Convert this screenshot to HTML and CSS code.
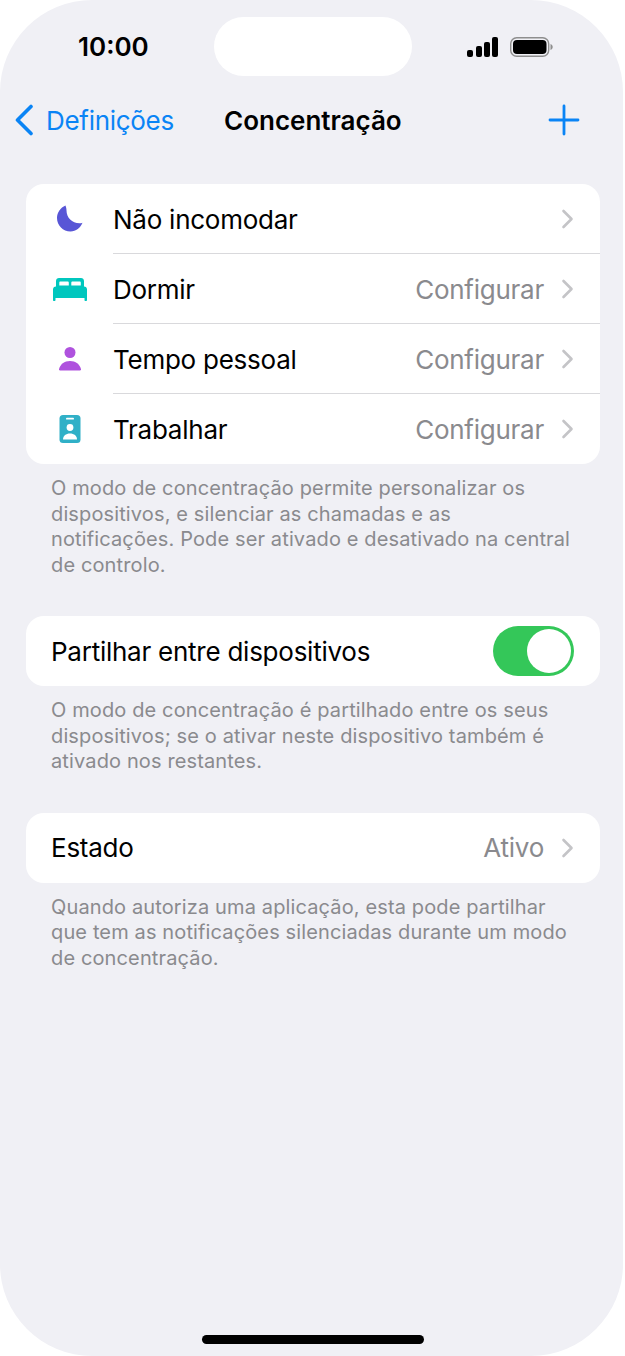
FILE: index.html
```html
<!DOCTYPE html>
<html lang="pt">
<head>
    <meta charset="UTF-8">
    <meta name="viewport" content="width=device-width, initial-scale=1.0">
    <title>Concentração</title>
    <link rel="stylesheet" href="styles.css">
</head>
<body>

<div class="screen">
    <!-- Barra de estado -->
    <div class="status-bar">
        <span class="clock">10:00</span>
        <div class="island"></div>
        <div class="status-icons">
            <svg class="signal" width="32" height="20" viewBox="0 0 32 20">
                <rect x="0" y="13" width="6" height="7" rx="2"/>
                <rect x="9" y="9" width="6" height="11" rx="2"/>
                <rect x="17" y="5" width="6" height="15" rx="2"/>
                <rect x="25" y="0" width="6" height="20" rx="2"/>
            </svg>
            <svg class="battery" width="44" height="20" viewBox="0 0 44 20">
                <rect x="0.7" y="0.7" width="38" height="18.6" rx="6" fill="none" stroke="#8e8e8e" stroke-width="1.4"/>
                <rect x="3" y="3" width="33.5" height="14" rx="4"/>
                <path d="M40.5 7v6c1.400-.5 2.200-1.700 2.200-3s-.8-2.500-2.200-3z" fill="#8e8e8e"/>
            </svg>
        </div>
    </div>

    <!-- Navegação -->
    <div class="nav-bar">
        <a class="back">
            <svg width="20" height="32" viewBox="0 0 20 32"><path d="M17 2.500 3.500 16 17 29.500" fill="none" stroke="#0a84f5" stroke-width="3.600" stroke-linecap="round" stroke-linejoin="round"/></svg>
            <span>Definições</span>
        </a>
        <h1>Concentração</h1>
        <svg class="plus" width="32" height="32" viewBox="0 0 32 32"><path d="M16 2v28M2 16h28" stroke="#0a84f5" stroke-width="2.800" stroke-linecap="round"/></svg>
    </div>

    <div class="group">
        <div class="row">
            <svg class="row-icon" width="30" height="30" viewBox="0 0 30 30"><path d="M10.500 1.500C5.500 3.500 2 8.500 2 14c0 7.500 6 13.500 13.500 13.500 5.500 0 10-3.500 12-8.700-1 .4-2 .5-3 .5-7.500 0-13-5.800-13-12.800 0-2-.5-3.500-1-5z" fill="#5856d6"/></svg>
            <div class="row-body"><span class="row-label">Não incomodar</span><svg class="chevron" width="13" height="20" viewBox="0 0 13 20"><path d="M2.500 2 10.500 10 2.500 18" fill="none" stroke="#c4c4c7" stroke-width="2.600" stroke-linecap="round" stroke-linejoin="round"/></svg></div>
        </div>
        <div class="row">
            <svg class="row-icon" width="34" height="23" viewBox="0 0 34 23"><path fill-rule="evenodd" d="M6 0h22c1.700 0 3 1.300 3 3v6H3V3c0-1.700 1.300-3 3-3zM7.500 3.500c-.8 0-1.200.5-1.200 1.200V7.500h9.500V4.700c0-.7-.5-1.200-1.200-1.200zm12 0c-.7 0-1.200.5-1.200 1.200V7.500h9.500V4.700c0-.7-.4-1.200-1.200-1.200z" fill="#00c7be"/><path d="M3 8.500h28c1.800 0 3 1.200 3 3V22c0 .7-.4 1-1 1h-.5c-.6 0-1-.3-1-1v-2h-29v2c0 .7-.4 1-1 1H1c-.6 0-1-.3-1-1V11.500c0-1.800 1.200-3 3-3z" fill="#00c7be"/></svg>
            <div class="row-body"><span class="row-label">Dormir</span><span class="row-value">Configurar</span><svg class="chevron" width="13" height="20" viewBox="0 0 13 20"><path d="M2.500 2 10.500 10 2.500 18" fill="none" stroke="#c4c4c7" stroke-width="2.600" stroke-linecap="round" stroke-linejoin="round"/></svg></div>
        </div>
        <div class="row">
            <svg class="row-icon" width="30" height="30" viewBox="0 0 30 30"><circle cx="15" cy="8.500" r="5.500" fill="#af52de"/><path d="M5 26.500c-.8 0-1.100-.5-1-1.200C5 20.500 9.500 17 15 17s10 3.500 11 8.300c.1.700-.2 1.200-1 1.200z" fill="#af52de"/></svg>
            <div class="row-body"><span class="row-label">Tempo pessoal</span><span class="row-value">Configurar</span><svg class="chevron" width="13" height="20" viewBox="0 0 13 20"><path d="M2.500 2 10.500 10 2.500 18" fill="none" stroke="#c4c4c7" stroke-width="2.600" stroke-linecap="round" stroke-linejoin="round"/></svg></div>
        </div>
        <div class="row">
            <svg class="row-icon" width="30" height="30" viewBox="0 0 30 30"><rect x="4.500" y="1" width="21" height="28" rx="3.500" fill="#30b0c7"/><rect x="11" y="3.800" width="8" height="1.800" rx=".9" fill="#fff"/><circle cx="15" cy="13.500" r="3.400" fill="#fff"/><path d="M8 25.500c0-3.800 3-6 7-6s7 2.200 7 6z" fill="#fff"/></svg>
            <div class="row-body"><span class="row-label">Trabalhar</span><span class="row-value">Configurar</span><svg class="chevron" width="13" height="20" viewBox="0 0 13 20"><path d="M2.500 2 10.500 10 2.500 18" fill="none" stroke="#c4c4c7" stroke-width="2.600" stroke-linecap="round" stroke-linejoin="round"/></svg></div>
        </div>
    </div>
    <p class="footnote">O modo de concentração permite personalizar os<br>dispositivos, e silenciar as chamadas e as<br>notificações. Pode ser ativado e desativado na central<br>de controlo.</p>

    <div class="group">
        <div class="row row-plain">
            <div class="row-body"><span class="row-label">Partilhar entre dispositivos</span><div class="toggle"><div class="knob"></div></div></div>
        </div>
    </div>
    <p class="footnote">O modo de concentração é partilhado entre os seus<br>dispositivos; se o ativar neste dispositivo também é<br>ativado nos restantes.</p>

    <div class="group">
        <div class="row row-plain">
            <div class="row-body"><span class="row-label">Estado</span><span class="row-value">Ativo</span><svg class="chevron" width="13" height="20" viewBox="0 0 13 20"><path d="M2.500 2 10.500 10 2.500 18" fill="none" stroke="#c4c4c7" stroke-width="2.600" stroke-linecap="round" stroke-linejoin="round"/></svg></div>
        </div>
    </div>
    <p class="footnote">Quando autoriza uma aplicação, esta pode partilhar<br>que tem as notificações silenciadas durante um modo<br>de concentração.</p>

    <div class="home-indicator"></div>
</div>

</body>
</html>
```

FILE: styles.css
```css
html, body {
    margin: 0;
    padding: 0;
    background-color: #fff;
}
body {
    font-family: Inter, "Liberation Sans", sans-serif;
    width: 625px;
    height: 1356px;
    overflow: hidden;
}
.screen {
    width: 623px;
    height: 1356px;
    background-color: #f0f0f5;
    border-radius: 92px;
    display: flex;
    flex-direction: column;
    color: #000;
}
.status-bar {
    display: flex;
    align-items: center;
    height: 59px;
    padding-top: 17px;
    padding-left: 78px;
    padding-right: 69px;
}
.clock {
    width: 136px;
    font-size: 26px;
    font-weight: 600;
}
.island {
    width: 198px;
    height: 59px;
    background-color: #fff;
    border-radius: 30px;
}
.status-icons {
    margin-left: auto;
    display: flex;
    align-items: center;
    gap: 11px;
}
.nav-bar {
    display: flex;
    align-items: center;
    height: 44px;
    margin-top: 22px;
    padding-left: 14px;
    padding-right: 43px;
}
.back {
    display: flex;
    align-items: center;
    gap: 12px;
    width: 210px;
    color: #0a84f5;
    font-size: 26px;
    letter-spacing: -0.3px;
}
h1 {
    margin: 0;
    font-size: 26px;
    font-weight: 600;
}
.plus {
    margin-left: auto;
}
.group {
    margin: 42px 23px 0 26px;
    background-color: #fff;
    border-radius: 18px;
    overflow: hidden;
}
.row {
    display: flex;
    align-items: center;
    height: 70px;
}
.row-icon {
    width: 88px;
    margin-right: -1px;
    flex-shrink: 0;
}
.row-plain {
    padding-left: 25px;
}
.row-body {
    flex: 1;
    height: 100%;
    display: flex;
    align-items: center;
    padding-right: 26px;
    font-size: 26px;
    letter-spacing: -0.25px;
}
.row:not(:last-child) .row-body {
    box-shadow: inset 0 -1px 0 #d9d9dc;
}
.row-value {
    margin-left: auto;
    margin-right: 17px;
    color: #8a8a8e;
}
.row-label + .chevron {
    margin-left: auto;
}
.toggle {
    margin-left: auto;
    width: 81px;
    height: 50px;
    background-color: #34c759;
    border-radius: 25px;
    display: flex;
    justify-content: flex-end;
    align-items: center;
    padding-right: 3px;
    box-sizing: border-box;
}
.knob {
    width: 44px;
    height: 44px;
    background-color: #fff;
    border-radius: 50%;
}
.footnote {
    margin: 12px 40px 0 51px;
    font-size: 20px;
    line-height: 25.500px;
    letter-spacing: 0.13px;
    color: #8a8a8e;
    white-space: nowrap;
}
.group + .footnote + .group {
    margin-top: 38px;
}
.home-indicator {
    margin: auto auto 12px;
    width: 222px;
    height: 9px;
    background-color: #000;
    border-radius: 5px;
    position: relative;
    left: 1px;
}
```
